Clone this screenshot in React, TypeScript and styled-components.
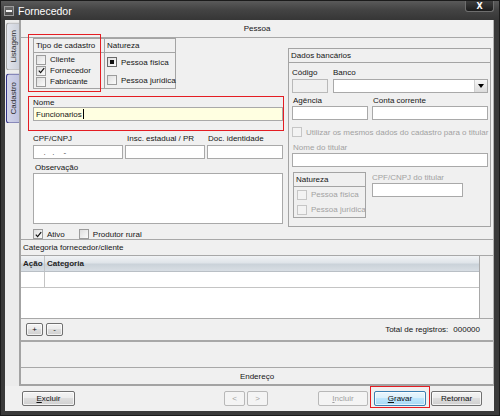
import React from "react";
import styled, { createGlobalStyle, css } from "styled-components";

const LINE = "#a8a8a8";

const GlobalStyle = createGlobalStyle`
  *, *::before, *::after { box-sizing: border-box; }
  html, body { margin: 0; padding: 0; background: #ffffff; }
  body {
    font-family: "Liberation Sans", Arial, sans-serif;
    font-size: 8px;
    color: #151515;
  }
`;

const Window = styled.div`
  width: 500px;
  height: 416px;
  display: flex;
  flex-direction: column;
  background: #3a3a3a;
  border: 1px solid #1b1b1b;
`;

const TitleBar = styled.div`
  height: 19px;
  flex: none;
  display: flex;
  align-items: center;
  padding-left: 3px;
  background: linear-gradient(#5a5a5a, #444444 45%, #363636);
`;

const SysIcon = styled.span`
  width: 10px;
  height: 10px;
  flex: none;
  border: 1px solid #9c9c9c;
  background: linear-gradient(#6a6a6a, #4a4a4a);
  display: flex;
  align-items: center;
  justify-content: center;
  &::after {
    content: "";
    width: 6px;
    height: 2px;
    background: #f2f2f2;
  }
`;

const TitleText = styled.span`
  margin-left: 4px;
  color: #ffffff;
  font-size: 10.5px;
`;

const CloseBtn = styled.span`
  margin-left: auto;
  margin-right: 5px;
  align-self: flex-start;
  width: 29px;
  height: 11px;
  display: flex;
  align-items: center;
  justify-content: center;
  background: linear-gradient(#3e3e3e, #1c1c1c);
  border: 1px solid #6e6e6e;
  border-top: none;
  border-radius: 0 0 3px 3px;
  color: #ffffff;
  font-family: "DejaVu Sans", sans-serif;
  font-weight: bold;
  font-size: 8px;
`;

const Body = styled.div`
  flex: 1;
  margin: 0 5px 4px 4px;
  background: #f0f0f0;
  display: flex;
  flex-direction: column;
`;

const Main = styled.div`
  height: 366px;
  flex: none;
  display: flex;
`;

const TabColumn = styled.div`
  width: 14px;
  flex: none;
  padding: 2px 0 0 1px;
  display: flex;
  flex-direction: column;
  gap: 3px;
  background: #ececec;
`;

const Tab = styled.div<{ $active?: boolean }>`
  width: 13px;
  padding: ${(p) => (p.$active ? "8px 0" : "7px 0")};
  display: flex;
  align-items: center;
  justify-content: center;
  writing-mode: vertical-rl;
  transform: rotate(180deg);
  border: 1px solid ${(p) => (p.$active ? "#34348a" : "#a4a4a4")};
  border-left: none;
  border-radius: 0 3px 3px 0;
  background: ${(p) =>
    p.$active
      ? "linear-gradient(to left, #d2d4ea, #c0c3df)"
      : "linear-gradient(to left, #e2e5ec, #cdd1da)"};
  color: #2a2a2a;
  white-space: nowrap;
`;

const Panel = styled.div`
  flex: 1;
  display: flex;
  flex-direction: column;
  border-left: 2px solid #a3a3a3;
  border-right: 1px solid #b3b3b3;
  border-bottom: 2px solid #a3a3a3;
`;

const Bar = styled.div<{ $h: number; $left?: boolean; $noLine?: boolean }>`
  height: ${(p) => p.$h}px;
  flex: none;
  display: flex;
  align-items: center;
  justify-content: ${(p) => (p.$left ? "flex-start" : "center")};
  padding: 0 2px;
  border-bottom: ${(p) => (p.$noLine ? "none" : `1px solid ${LINE}`)};
  white-space: nowrap;
`;

const FormArea = styled.div`
  height: 202px;
  flex: none;
  display: flex;
  gap: 5px;
  padding-left: 12px;
  border-bottom: 1px solid ${LINE};
`;

const LeftCol = styled.div`
  width: 250px;
  flex: none;
  display: flex;
  flex-direction: column;
`;

const RightCol = styled.div`
  width: 203px;
  flex: none;
  display: flex;
  flex-direction: column;
`;

const RedMark = styled.span<{ $t: number; $l: number; $r: number; $b: number }>`
  position: absolute;
  top: ${(p) => p.$t}px;
  left: ${(p) => p.$l}px;
  right: ${(p) => p.$r}px;
  bottom: ${(p) => p.$b}px;
  border: 1px solid #e41d23;
  pointer-events: none;
`;

const TypeGroup = styled.div`
  position: relative;
  align-self: flex-start;
  display: flex;
`;

const GroupCol = styled.div<{ $w: number; $first?: boolean }>`
  width: ${(p) => p.$w}px;
  height: 51px;
  border: 1px solid #a4a4a4;
  border-left: ${(p) => (p.$first ? "1px solid #a4a4a4" : "none")};
  display: flex;
  flex-direction: column;
`;

const GroupHead = styled.div`
  height: 14px;
  flex: none;
  display: flex;
  align-items: center;
  padding-left: 2px;
  border-bottom: 1px solid #a4a4a4;
  white-space: nowrap;
`;

const GroupItems = styled.div<{ $pt?: number; $pl: number }>`
  display: flex;
  flex-direction: column;
  padding-top: ${(p) => p.$pt ?? 0}px;
  padding-left: ${(p) => p.$pl}px;
`;

const CheckRow = styled.div<{ $h?: number; $muted?: boolean }>`
  height: ${(p) => (p.$h ? `${p.$h}px` : "auto")};
  display: flex;
  align-items: center;
  gap: 4px;
  white-space: nowrap;
  color: ${(p) => (p.$muted ? "#a2a2a2" : "#151515")};
`;

const Box = styled.span<{ $disabled?: boolean; $dark?: boolean }>`
  width: 10px;
  height: 10px;
  flex: none;
  display: flex;
  align-items: center;
  justify-content: center;
  border: 1px solid
    ${(p) => (p.$disabled ? "#c6c6c6" : p.$dark ? "#6a6a6a" : "#9c9c9c")};
  background: ${(p) =>
    p.$disabled ? "#f3f3f3" : "linear-gradient(135deg, #dedede, #fbfbfb)"};
`;

const FillSquare = styled.span`
  width: 4px;
  height: 4px;
  background: #111111;
`;

const Check = () => (
  <svg width="7" height="7" viewBox="0 0 7 7">
    <polyline points="0.8,3.6 2.6,5.6 6.2,1.2" fill="none" stroke="#111" strokeWidth="1.2" />
  </svg>
);

const Field = styled.div<{ $w?: number; $gap: number; $mt?: number }>`
  display: flex;
  flex-direction: column;
  gap: ${(p) => p.$gap}px;
  margin-top: ${(p) => p.$mt ?? 0}px;
  ${(p) => (p.$w ? `width: ${p.$w}px; flex: none;` : "flex: 1; min-width: 0;")}
`;

const NameField = styled(Field)`
  position: relative;
`;

const Label = styled.div<{ $muted?: boolean; $pl?: number }>`
  height: 10px;
  display: flex;
  align-items: center;
  white-space: nowrap;
  padding-left: ${(p) => p.$pl ?? 0}px;
  color: ${(p) => (p.$muted ? "#a2a2a2" : "#151515")};
`;

const TextBox = styled.div<{ $h?: number; $bg?: string; $disabled?: boolean }>`
  height: ${(p) => p.$h ?? 14}px;
  display: flex;
  align-items: center;
  padding-left: 2px;
  border: 1px solid ${(p) => (p.$disabled ? "#b9b9b9" : "#a9a9a9")};
  background: ${(p) => p.$bg ?? (p.$disabled ? "#f0f0f0" : "#ffffff")};
  white-space: pre;
  overflow: hidden;
`;

const Caret = styled.span`
  width: 1px;
  height: 10px;
  margin-left: 1px;
  background: #000000;
`;

const Mask = styled.span`
  color: #444444;
  padding-left: 3px;
`;

const DropBtn = styled.span`
  margin-left: auto;
  width: 13px;
  height: 12px;
  display: flex;
  align-items: center;
  justify-content: center;
  border-left: 1px solid #d0d0d0;
  background: linear-gradient(#f6f6f6, #dcdcdc);
  &::after {
    content: "";
    border-left: 3px solid transparent;
    border-right: 3px solid transparent;
    border-top: 4px solid #000000;
  }
`;

const Row = styled.div<{ $gap: number; $mt?: number; $start?: boolean }>`
  display: flex;
  gap: ${(p) => p.$gap}px;
  margin-top: ${(p) => p.$mt ?? 0}px;
  align-items: ${(p) => (p.$start ? "flex-start" : "stretch")};
`;

const BankGroup = styled.div`
  margin-top: 10px;
  height: 179px;
  border: 1px solid #a4a4a4;
  display: flex;
  flex-direction: column;
`;

const BankBody = styled.div`
  padding: 4px 2px 0 3px;
  display: flex;
  flex-direction: column;
`;

const SubGroup = styled.div`
  width: 73px;
  flex: none;
  margin-left: 1px;
  border: 1px solid #a4a4a4;
  display: flex;
  flex-direction: column;
`;

const Grid = styled.div`
  height: 63px;
  flex: none;
  display: flex;
  border-bottom: 1px solid ${LINE};
`;

const GridTable = styled.div`
  flex: 1;
  display: flex;
  flex-direction: column;
  background: #ffffff;
  border-right: 1px solid ${LINE};
`;

const GridHeader = styled.div`
  height: 16px;
  flex: none;
  display: flex;
  border-bottom: 1px solid #b9bfc5;
  background: linear-gradient(#f1f3f5 0%, #dfe4e9 45%, #cad2d9 55%, #d8dee4 100%);
  font-weight: bold;
  color: #222222;
`;

const GridRow = styled.div`
  height: 16px;
  flex: none;
  display: flex;
  border-bottom: 1px solid #c4c4c4;
`;

const Cell = styled.div<{ $w?: number }>`
  display: flex;
  align-items: center;
  padding-left: 2px;
  white-space: nowrap;
  ${(p) =>
    p.$w ? `width: ${p.$w}px; flex: none; border-right: 1px solid #c4c4c4;` : "flex: 1;"}
`;

const ScrollTrack = styled.div`
  width: 13px;
  flex: none;
  background: #efefef;
`;

const GridFooter = styled.div`
  height: 21px;
  flex: none;
  display: flex;
  align-items: center;
  padding: 0 13px 0 5px;
  gap: 3px;
`;

const Total = styled.div`
  margin-left: auto;
  display: flex;
  gap: 5px;
  white-space: nowrap;
`;

const EmptySection = styled.div`
  height: 28px;
  flex: none;
  border-top: 2px solid ${LINE};
  border-bottom: 1px solid ${LINE};
`;

const Footer = styled.div`
  height: 25px;
  flex: none;
  display: flex;
  align-items: flex-start;
  padding: 5px 12px 0 17px;
`;

const Nav = styled.div`
  margin-left: 149px;
  display: flex;
  gap: 2px;
`;

const Actions = styled.div`
  margin-left: auto;
  display: flex;
  gap: 6px;
`;

const Mark = styled.span`
  position: relative;
  display: flex;
  margin-right: -1px;
`;

const Btn = styled.button<{ $w: number; $h?: number; $primary?: boolean }>`
  width: ${(p) => p.$w}px;
  height: ${(p) => p.$h ?? 15}px;
  padding: 0;
  font-family: inherit;
  font-size: 8px;
  color: #111111;
  border: 1px solid #707070;
  border-radius: 2px;
  background: linear-gradient(#f3f3f3 0%, #ebebeb 50%, #dddddd 50%, #cfcfcf 100%);
  box-shadow: inset 0 0 0 1px rgba(255, 255, 255, 0.7);
  display: flex;
  align-items: center;
  justify-content: center;
  ${(p) =>
    p.$primary &&
    css`
      border-color: #3c7fb1;
      background: linear-gradient(#eaf6fd 0%, #d9f0fc 50%, #bee6fd 50%, #a7d9f5 100%);
    `}
  &:disabled {
    color: #a0a0a0;
    border-color: #b8b8b8;
    background: #f4f4f4;
    box-shadow: none;
  }
`;

export default function App() {
  return (
    <>
      <GlobalStyle />
      <Window>
        <TitleBar>
          <SysIcon />
          <TitleText>Fornecedor</TitleText>
          <CloseBtn>X</CloseBtn>
        </TitleBar>
        <Body>
          <Main>
            <TabColumn>
              <Tab>Listagem</Tab>
              <Tab $active>Cadastro</Tab>
            </TabColumn>
            <Panel>
              <Bar $h={18}>Pessoa</Bar>
              <FormArea>
                <LeftCol>
                  <TypeGroup>
                    <GroupCol $w={72} $first>
                      <GroupHead>Tipo de cadastro</GroupHead>
                      <GroupItems $pt={1} $pl={2}>
                        <CheckRow $h={11}>
                          <Box />
                          <span>Cliente</span>
                        </CheckRow>
                        <CheckRow $h={11}>
                          <Box>
                            <Check />
                          </Box>
                          <span>Fornecedor</span>
                        </CheckRow>
                        <CheckRow $h={11}>
                          <Box />
                          <span>Fabricante</span>
                        </CheckRow>
                      </GroupItems>
                    </GroupCol>
                    <GroupCol $w={71}>
                      <GroupHead>Natureza</GroupHead>
                      <GroupItems $pl={2}>
                        <CheckRow $h={18}>
                          <Box $dark>
                            <FillSquare />
                          </Box>
                          <span>Pessoa física</span>
                        </CheckRow>
                        <CheckRow $h={18}>
                          <Box />
                          <span>Pessoa jurídica</span>
                        </CheckRow>
                      </GroupItems>
                    </GroupCol>
                    <RedMark $t={-4} $l={-5} $r={75} $b={-3} />
                  </TypeGroup>

                  <NameField $gap={0} $mt={8}>
                    <Label>Nome</Label>
                    <TextBox $bg="#ffffe1">
                      Funcionarios
                      <Caret />
                    </TextBox>
                    <RedMark $t={-1} $l={-5} $r={-1} $b={-2} />
                  </NameField>

                  <Row $gap={2} $mt={4}>
                    <Field $w={90} $gap={2}>
                      <Label>CPF/CNPJ</Label>
                      <TextBox>
                        <Mask>{"  .   .    -"}</Mask>
                      </TextBox>
                    </Field>
                    <Field $w={80} $gap={2}>
                      <Label $pl={2}>Insc. estadual / PR</Label>
                      <TextBox />
                    </Field>
                    <Field $gap={2}>
                      <Label $pl={1}>Doc. identidade</Label>
                      <TextBox />
                    </Field>
                  </Row>

                  <Field $gap={1} $mt={3}>
                    <Label $pl={2}>Observação</Label>
                    <TextBox $h={51} />
                  </Field>

                  <Row $gap={14} $mt={5}>
                    <CheckRow>
                      <Box>
                        <Check />
                      </Box>
                      <span>Ativo</span>
                    </CheckRow>
                    <CheckRow>
                      <Box />
                      <span>Produtor rural</span>
                    </CheckRow>
                  </Row>
                </LeftCol>

                <RightCol>
                  <BankGroup>
                    <GroupHead>Dados bancários</GroupHead>
                    <BankBody>
                      <Row $gap={5}>
                        <Field $w={36} $gap={2}>
                          <Label>Código</Label>
                          <TextBox $disabled />
                        </Field>
                        <Field $gap={2}>
                          <Label>Banco</Label>
                          <TextBox>
                            <DropBtn />
                          </TextBox>
                        </Field>
                      </Row>
                      <Row $gap={4} $mt={2}>
                        <Field $w={76} $gap={1}>
                          <Label $pl={1}>Agência</Label>
                          <TextBox />
                        </Field>
                        <Field $gap={1}>
                          <Label $pl={1}>Conta corrente</Label>
                          <TextBox />
                        </Field>
                      </Row>
                      <Row $gap={0} $mt={7}>
                        <CheckRow $muted>
                          <Box $disabled />
                          <span>Utilizar os mesmos dados do cadastro para o titular</span>
                        </CheckRow>
                      </Row>
                      <Field $gap={1} $mt={5}>
                        <Label $muted $pl={1}>
                          Nome do titular
                        </Label>
                        <TextBox />
                      </Field>
                      <Row $gap={6} $mt={5} $start>
                        <SubGroup>
                          <GroupHead>Natureza</GroupHead>
                          <GroupItems $pl={3}>
                            <CheckRow $h={15} $muted>
                              <Box $disabled />
                              <span>Pessoa física</span>
                            </CheckRow>
                            <CheckRow $h={15} $muted>
                              <Box $disabled />
                              <span>Pessoa jurídica</span>
                            </CheckRow>
                          </GroupItems>
                        </SubGroup>
                        <Field $w={91} $gap={1}>
                          <Label $muted>CPF/CNPJ do titular</Label>
                          <TextBox />
                        </Field>
                      </Row>
                    </BankBody>
                  </BankGroup>
                </RightCol>
              </FormArea>

              <Bar $h={16} $left>
                Categoria fornecedor/cliente
              </Bar>

              <Grid>
                <GridTable>
                  <GridHeader>
                    <Cell $w={24}>Ação</Cell>
                    <Cell>Categoria</Cell>
                  </GridHeader>
                  <GridRow>
                    <Cell $w={24} />
                    <Cell />
                  </GridRow>
                </GridTable>
                <ScrollTrack />
              </Grid>

              <GridFooter>
                <Btn $w={17} $h={13}>
                  +
                </Btn>
                <Btn $w={17} $h={13}>
                  -
                </Btn>
                <Total>
                  <span>Total de registros:</span>
                  <span>000000</span>
                </Total>
              </GridFooter>

              <EmptySection />

              <Bar $h={16} $noLine>
                Endereço
              </Bar>
            </Panel>
          </Main>

          <Footer>
            <Btn $w={53}>
              <u>E</u>xcluir
            </Btn>
            <Nav>
              <Btn $w={21} disabled>
                &lt;
              </Btn>
              <Btn $w={21} disabled>
                &gt;
              </Btn>
            </Nav>
            <Actions>
              <Btn $w={50} disabled>
                <u>I</u>ncluir
              </Btn>
              <Mark>
                <Btn $w={52} $primary>
                  <u>G</u>ravar
                </Btn>
                <RedMark $t={-5} $l={-4} $r={-4} $b={-2} />
              </Mark>
              <Btn $w={51}>Retornar</Btn>
            </Actions>
          </Footer>
        </Body>
      </Window>
    </>
  );
}
